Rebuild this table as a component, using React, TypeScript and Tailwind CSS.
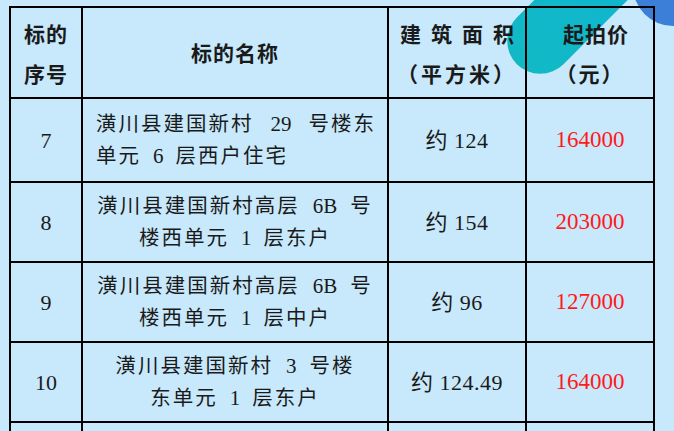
import React from 'react';

type Row = {
  no: string;
  name: string[];
  gaps: string[];
  left: boolean;
  area: string;
  price: string;
  h: string;
};

const rows: Row[] = [
  { no: '7', name: ['潢川县建国新村 29 号楼东', '单元 6 层西户住宅'], gaps: ['mx-[17px]', 'mx-[12px]'], left: true, area: '约 124', price: '164000', h: 'h-[84px]' },
  { no: '8', name: ['潢川县建国新村高层 6B 号', '楼西单元 1 层东户'], gaps: ['mx-[13px]', 'mx-[12px]'], left: false, area: '约 154', price: '203000', h: 'h-[80px]' },
  { no: '9', name: ['潢川县建国新村高层 6B 号', '楼西单元 1 层中户'], gaps: ['mx-[13px]', 'mx-[12px]'], left: false, area: '约 96', price: '127000', h: 'h-[80px]' },
  { no: '10', name: ['潢川县建国新村 3 号楼', '东单元 1 层东户'], gaps: ['mx-[13px]', 'mx-[12px]'], left: false, area: '约 124.49', price: '164000', h: 'h-[80px]' },
];

const serif = "font-['Liberation_Serif','Noto_Sans_CJK_SC',serif]";
const sans = "font-['Noto_Sans_CJK_SC',sans-serif]";

const cell = 'border-r-2 border-b-2 border-black flex items-center justify-center';

// digits sit in the line with wider gaps, like the source document
const NameLine: React.FC<{ text: string; gap: string }> = ({ text, gap }) => (
  <span className="whitespace-nowrap flex items-baseline">
    {text.split(' ').map((part, i) =>
      /^[0-9A-Z.]+$/.test(part) ? (
        <span key={i} className={`${gap} text-[21px] tracking-normal`}>{part}</span>
      ) : (
        <span key={i}>{part}</span>
      )
    )}
  </span>
);

const App: React.FC = () => {
  return (
    <div className="relative w-[674px] h-[431px] overflow-hidden bg-[#c8e8fb]">
      {/* decorations behind the table */}
      <div className="absolute left-[489px] top-[-36px] w-[190px] h-[66px] rounded-full bg-gradient-to-r from-[#12b9c4] to-[#0fb3d3] -rotate-45" />
      <div className="absolute left-[633px] top-[-54px] w-[84px] h-[80px] rounded-full bg-[#3b7fd9]" />

      <div className="relative ml-[9px] mt-[6px] w-[646px] border-l-2 border-t-2 border-black grid grid-cols-[72px_306px_138px_128px] text-[#1a1a1a]">
        {/* header */}
        <div className={`${cell} h-[91px] flex-col ${sans} font-bold text-[21px] leading-[40px] tracking-[1px]`}>
          <span>标的</span>
          <span>序号</span>
        </div>
        <div className={`${cell} ${sans} font-bold text-[21px] tracking-[1px]`}>
          <span>标的名称</span>
        </div>
        <div className={`${cell} flex-col ${sans} font-bold text-[21px] leading-[40px]`}>
          <span className="tracking-[10px] ml-[10px]">建筑面积</span>
          <span className="tracking-[3px]">（平方米）</span>
        </div>
        <div className={`${cell} flex-col ${sans} font-bold text-[21px] leading-[40px]`}>
          <span className="tracking-[1px] ml-[12px]">起拍价</span>
          <span className="tracking-[2px]">（元）</span>
        </div>

        {rows.map((r) => (
          <React.Fragment key={r.no}>
            <div className={`${cell} ${r.h} ${serif} text-[22px]`}>{r.no}</div>
            <div
              className={`border-r-2 border-b-2 border-black flex flex-col justify-center ${
                r.left ? 'items-start pl-[13px]' : 'items-center'
              } ${serif} text-[20.5px] leading-[32px] tracking-[2px]`}
            >
              <NameLine text={r.name[0]} gap={r.gaps[0]} />
              <NameLine text={r.name[1]} gap={r.gaps[1]} />
            </div>
            <div className={`${cell} ${serif} text-[22px] tracking-[0.5px]`}>{r.area}</div>
            <div className={`${cell} ${serif} text-[23px] text-[#ff1a1a]`}>{r.price}</div>
          </React.Fragment>
        ))}

        <div className={`${cell} h-[40px]`} />
        <div className={cell} />
        <div className={cell} />
        <div className={cell} />
      </div>
    </div>
  );
};

export default App;
